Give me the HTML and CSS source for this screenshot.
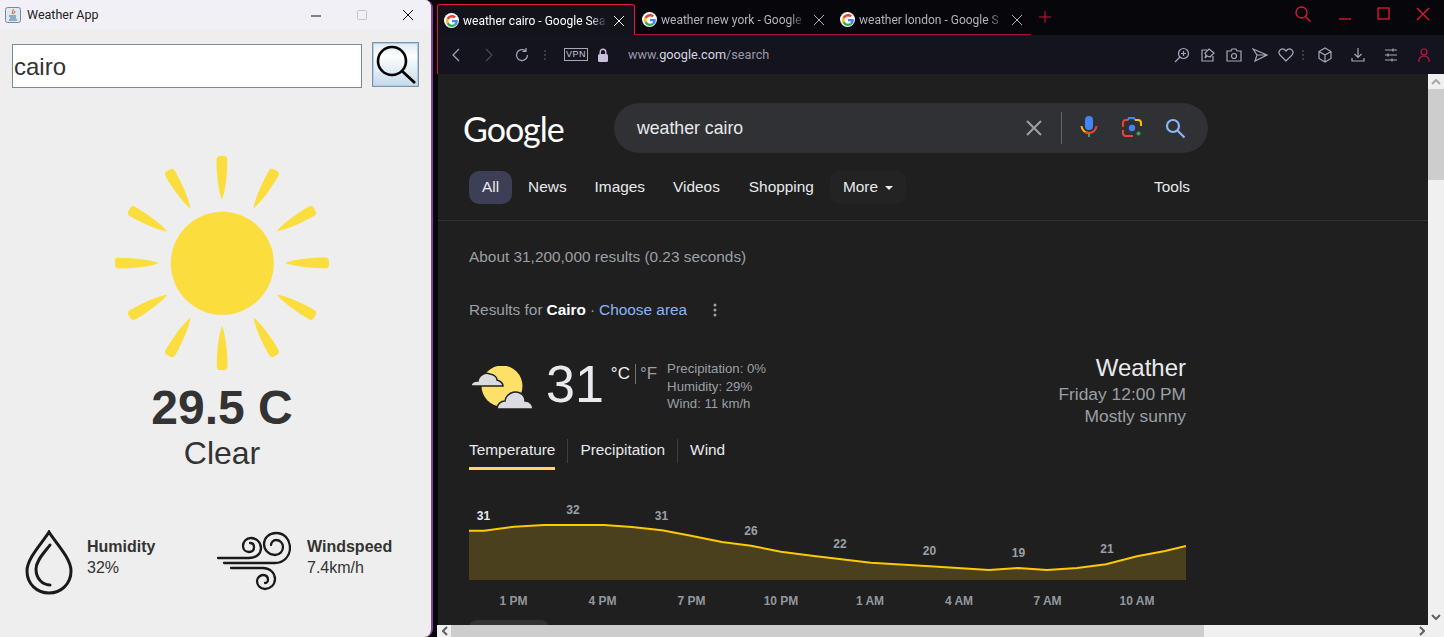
FILE: index.html
```html
<!DOCTYPE html>
<html>
  <head lang="en">
    <meta charset="UTF-8" />
    <title>Weather App</title>
    <link rel="stylesheet" href="styles.css">
  </head>

  <body>
    <svg class="defs" width="0" height="0">
      <symbol id="g" viewBox="0 0 48 48">
        <path fill="#ea4335" d="M24 9.5c3.5 0 6.700 1.200 9.200 3.600l6.900-6.900C35.900 2.400 30.500 0 24 0 14.600 0 6.500 5.400 2.600 13.200l8 6.200C12.500 13.700 17.800 9.500 24 9.500z"/>
        <path fill="#4285f4" d="M46.900 24.500c0-1.600-.1-3.100-.4-4.500H24v9h12.900c-.6 3-2.200 5.500-4.700 7.200l7.700 6c4.500-4.200 7-10.300 7-17.700z"/>
        <path fill="#fbbc05" d="M10.500 28.600c-.5-1.400-.8-3-.8-4.600s.3-3.200.8-4.600l-8-6.200C.9 16.500 0 20.100 0 24s.9 7.500 2.600 10.800l7.900-6.200z"/>
        <path fill="#34a853" d="M24 48c6.500 0 11.900-2.100 15.900-5.800l-7.700-6c-2.200 1.400-4.900 2.300-8.200 2.300-6.200 0-11.500-4.200-13.400-9.900l-8 6.200C6.500 42.600 14.600 48 24 48z"/>
      </symbol>
      <symbol id="ray" viewBox="0 0 240 240">
        <path d="M116.500 19Q116.500 15 120 15H124Q127.500 15 127.300 19Q127 45 122 59Q118 50 116.500 25Z"/>
      </symbol>
    </svg>

    <div class="app">
      <div class="titlebar">
        <svg class="java-icon" width="16" height="16" viewBox="0 0 16 16">
          <rect x="0.500" y="0.500" width="15" height="15" rx="2" fill="#dfe8f1" stroke="#6f8ba6"/>
          <path d="M8 2c1.500 2-2 3-.5 5M10 4c0 1.500-2 2-1 3" fill="none" stroke="#d9682a" stroke-width="1.100"/>
          <path d="M4 9h7M5 11h6M4 13h8" stroke="#3f6f9c" stroke-width="1.100"/>
        </svg>
        <span class="title">Weather App</span>
        <div class="win-btns">
          <svg width="12" height="12" viewBox="0 0 12 12"><path d="M1 7h10" stroke="#111"/></svg>
          <svg width="12" height="12" viewBox="0 0 12 12"><rect x="1.500" y="1.500" width="9" height="9" rx="1" fill="none" stroke="#c4c4c8"/></svg>
          <svg width="12" height="12" viewBox="0 0 12 12"><path d="M1 1l10 10M11 1L1 11" stroke="#111"/></svg>
        </div>
      </div>

      <div class="search-row">
        <input class="city-input" type="text" value="cairo" />
        <button class="search-btn">
          <svg width="45" height="43" viewBox="0 0 45 43">
            <circle cx="19" cy="18" r="14" fill="none" stroke="#000" stroke-width="2.600"/>
            <path d="M29 28l13 12" stroke="#000" stroke-width="2.800"/>
          </svg>
        </button>
      </div>

      <div class="current">
        <svg class="sun" width="240" height="240" viewBox="0 0 240 240" fill="#fbdd3d">
          <circle cx="122.300" cy="122.300" r="51.500"/>
          <g id="rays">
            <use href="#ray" width="240" height="240"/>
            <use href="#ray" width="240" height="240" transform="rotate(30 122 122)"/>
            <use href="#ray" width="240" height="240" transform="rotate(60 122 122)"/>
            <use href="#ray" width="240" height="240" transform="rotate(90 122 122)"/>
            <use href="#ray" width="240" height="240" transform="rotate(120 122 122)"/>
            <use href="#ray" width="240" height="240" transform="rotate(150 122 122)"/>
            <use href="#ray" width="240" height="240" transform="rotate(180 122 122)"/>
            <use href="#ray" width="240" height="240" transform="rotate(210 122 122)"/>
            <use href="#ray" width="240" height="240" transform="rotate(240 122 122)"/>
            <use href="#ray" width="240" height="240" transform="rotate(270 122 122)"/>
            <use href="#ray" width="240" height="240" transform="rotate(300 122 122)"/>
            <use href="#ray" width="240" height="240" transform="rotate(330 122 122)"/>
          </g>
        </svg>
        <div class="temp">29.5 C</div>
        <div class="cond">Clear</div>
      </div>

      <div class="stats">
        <div class="stat stat-hum">
          <svg width="48" height="65" viewBox="0 0 48 65" fill="none" stroke="#1a1a1a" stroke-width="3" stroke-linecap="round">
            <path d="M24 2C18 12 2 28 2 41C2 54 12 63 24 63C36 63 46 54 46 41C46 28 30 12 24 2Z"/>
            <path d="M25 15C20 22 11 30 11 39C11 48 17 55 25 55"/>
          </svg>
          <div class="stat-text">
            <b>Humidity</b>
            <span>32%</span>
          </div>
        </div>
        <div class="stat stat-wind">
          <svg width="74" height="60" viewBox="0 0 74 60" fill="none" stroke="#1a1a1a" stroke-width="2.300" stroke-linecap="round">
            <path d="M1 27H32C39 27 44 23 44 17C44 11 39 7 34 7C29 7 26 11 26 15C26 19 29 21 32 21C35 21 37 19 37 16C37 13 35 12 33 12"/>
            <path d="M7 32H58C67 32 73 25 73 17C73 8 67 2 59 2C52 2 47 7 47 13C47 19 52 24 58 24C63 24 66 20 66 16C66 12 63 9 59 9C56 9 54 12 54 14"/>
            <path d="M14 37H46C53 37 58 42 58 48C58 54 53 58 48 58C43 58 40 54 40 50C40 47 43 44 46 44C49 44 51 46 51 49C51 51 49 52 48 52"/>
          </svg>
          <div class="stat-text">
            <b>Windspeed</b>
            <span>7.4km/h</span>
          </div>
        </div>
      </div>
    </div>

    <div class="browser">
      <div class="tabstrip">
        <div class="tab tab-active">
          <span class="favicon"><svg width="12" height="12"><use href="#g" width="12" height="12"/></svg></span>
          <span class="tab-label">weather cairo - Google Sea</span>
          <svg class="tab-x" width="10" height="10" viewBox="0 0 10 10"><path d="M0 0l10 10M10 0L0 10"/></svg>
        </div>
        <div class="tab">
          <span class="favicon"><svg width="12" height="12"><use href="#g" width="12" height="12"/></svg></span>
          <span class="tab-label">weather new york - Google</span>
          <svg class="tab-x" width="10" height="10" viewBox="0 0 10 10"><path d="M0 0l10 10M10 0L0 10"/></svg>
        </div>
        <div class="tab">
          <span class="favicon"><svg width="12" height="12"><use href="#g" width="12" height="12"/></svg></span>
          <span class="tab-label">weather london - Google S</span>
          <svg class="tab-x" width="10" height="10" viewBox="0 0 10 10"><path d="M0 0l10 10M10 0L0 10"/></svg>
        </div>
        <svg class="new-tab" width="12" height="12" viewBox="0 0 12 12"><path d="M6 0v12M0 6h12"/></svg>
        <div class="wc">
          <svg width="16" height="16" viewBox="0 0 16 16"><circle cx="6.500" cy="6.500" r="5.500"/><path d="M10.500 10.500l5 5"/></svg>
          <svg width="14" height="16" viewBox="0 0 14 16"><path d="M1 13h12"/></svg>
          <svg width="14" height="14" viewBox="0 0 14 14"><rect x="1" y="1" width="11" height="11"/></svg>
          <svg width="14" height="14" viewBox="0 0 14 14"><path d="M1 1l12 12M13 1L1 13"/></svg>
        </div>
      </div>

      <div class="toolbar">
        <svg class="tb-icon" width="16" height="16" viewBox="0 0 16 16"><path d="M11 2L5 8l6 6"/></svg>
        <svg class="tb-icon dim" width="16" height="16" viewBox="0 0 16 16"><path d="M5 2l6 6-6 6"/></svg>
        <svg class="tb-icon" width="16" height="16" viewBox="0 0 16 16"><path d="M13.500 8A5.500 5.500 0 1 1 11.500 3.800M12 1v3.500H8.500"/></svg>
        <span class="tb-dots"></span>
        <span class="vpn">VPN</span>
        <svg class="lock" width="12" height="14" viewBox="0 0 12 14"><rect x="1" y="6" width="10" height="8" rx="1.500" fill="#c9bfd9"/><path d="M3.200 6V4a2.800 2.800 0 0 1 5.600 0v2" fill="none" stroke="#c9bfd9" stroke-width="1.400"/></svg>
        <span class="url">www.<em>google.com</em>/search</span>
        <div class="tb-right">
          <svg class="tb-icon" width="16" height="16" viewBox="0 0 16 16"><circle cx="9.500" cy="6.500" r="5"/><path d="M6 10L1 15M9.500 4v5M7 6.500h5"/></svg>
          <svg class="tb-icon" width="16" height="16" viewBox="0 0 16 16"><path d="M7 3H2v11h11V9M9 2l5 4-4 4-3-1-2 2 1-3-1-2z"/></svg>
          <svg class="tb-icon" width="16" height="16" viewBox="0 0 16 16"><path d="M1 4h4l1-2h4l1 2h4v10H1z"/><circle cx="8" cy="9" r="2.500"/></svg>
          <svg class="tb-icon" width="16" height="16" viewBox="0 0 16 16"><path d="M1 2l14 6-12 6 2-6zM5 8h10"/></svg>
          <svg class="tb-icon" width="16" height="16" viewBox="0 0 16 16"><path d="M8 14L2 8C-1 4 4-.5 8 4c4-4.500 9 0 6 4z"/></svg>
          <span class="tb-dots tb-dots-r"></span>
          <svg class="tb-icon wide" width="16" height="16" viewBox="0 0 16 16"><path d="M8 1l6 3.500v7L8 15l-6-3.500v-7zM2 4.500L8 8l6-3.500M8 8v7"/></svg>
          <svg class="tb-icon wide" width="16" height="16" viewBox="0 0 16 16"><path d="M8 1v9M4.500 7L8 10.500 11.500 7M2 11v3h12v-3"/></svg>
          <svg class="tb-icon wide" width="16" height="16" viewBox="0 0 16 16"><path d="M2 3h12M2 8h12M2 13h12M10 1.500v3M5 6.500v3M9 11.500v3"/></svg>
          <svg class="tb-icon wide user" width="16" height="16" viewBox="0 0 16 16"><circle cx="8" cy="5" r="3"/><path d="M3 15v-2c0-2 2-4 5-4s5 2 5 4v2"/></svg>
        </div>
      </div>

      <div class="viewport">
        <div class="page">
          <div class="g-head">
            <div class="g-logo">Google</div>
            <div class="g-search">
              <span class="g-query">weather cairo</span>
              <svg class="g-clear" width="16" height="16" viewBox="0 0 16 16"><path d="M1 1l14 14M15 1L1 15" stroke="#9aa0a6" stroke-width="2"/></svg>
              <span class="g-sep"></span>
              <svg class="g-mic" width="18" height="24" viewBox="0 0 18 24">
                <rect x="5" y="0" width="8" height="14" rx="4" fill="#4285f4"/>
                <path d="M1.500 10a7.500 7.500 0 0 0 7.500 7" fill="none" stroke="#fbbc05" stroke-width="2"/>
                <path d="M16.500 10a7.500 7.500 0 0 1-7.500 7 7 7 0 0 1-4-1.200" fill="none" stroke="#ea4335" stroke-width="2"/>
                <path d="M9 17v4" stroke="#34a853" stroke-width="2"/>
              </svg>
              <svg class="g-lens" width="22" height="22" viewBox="0 0 22 22" fill="none" stroke-width="2">
                <path d="M2 10V6a3 3 0 0 1 3-3h2" stroke="#ea4335"/>
                <path d="M7 3l1-2h5l1 2" stroke="#4285f4"/>
                <path d="M14 3h3a3 3 0 0 1 3 3v3" stroke="#fbbc05"/>
                <path d="M2 13v3a3 3 0 0 0 3 3h7" stroke="#ea4335"/>
                <circle cx="11" cy="11" r="3.200" fill="#4285f4" stroke="none"/>
                <circle cx="17.500" cy="16.500" r="2" fill="#34a853" stroke="none"/>
              </svg>
              <svg class="g-go" width="22" height="22" viewBox="0 0 22 22" fill="none" stroke="#8ab4f8" stroke-width="2.200"><circle cx="9" cy="9" r="6"/><path d="M13.500 13.500l7 7"/></svg>
            </div>
          </div>

          <div class="g-nav">
            <a class="nav-item nav-all">All</a>
            <a class="nav-item">News</a>
            <a class="nav-item">Images</a>
            <a class="nav-item">Videos</a>
            <a class="nav-item nav-shop">Shopping</a>
            <a class="nav-item nav-more">More <i class="caret"></i></a>
            <a class="nav-tools">Tools</a>
          </div>

          <div class="results">
            <div class="stats-line">About 31,200,000 results (0.23 seconds)</div>
            <div class="area-line">
              Results for <b>Cairo</b> · <a>Choose area</a>
              <svg class="kebab" width="4" height="14" viewBox="0 0 4 14" fill="#9aa0a6"><circle cx="2" cy="2" r="1.500"/><circle cx="2" cy="7" r="1.500"/><circle cx="2" cy="12" r="1.500"/></svg>
            </div>

            <div class="wx-top">
              <svg class="wx-icon" width="64" height="44" viewBox="0 0 64 44">
                <circle cx="32" cy="20" r="20.500" fill="#fde068"/>
                <path d="M1 20C1 17 4 15 8 15C9 9 15 6 20 8C25 9 27 12 27 14C30 15 33 17 33 20Z" fill="#dadce0" stroke="#202124" stroke-width="1.500"/>
                <path d="M27 43C27 38 31 35 35 35C36 28 44 24 50 27C54 29 55 32 55 35C60 35 63 39 63 43Z" fill="#dadce0" stroke="#202124" stroke-width="1.500"/>
              </svg>
              <span class="wx-deg">31</span>
              <span class="wx-units"><span class="wx-c">°C</span><span class="wx-f">°F</span></span>
              <div class="wx-details">
                <div>Precipitation: 0%</div>
                <div>Humidity: 29%</div>
                <div>Wind: 11 km/h</div>
              </div>
              <div class="wx-right">
                <div class="wx-title">Weather</div>
                <div>Friday 12:00 PM</div>
                <div>Mostly sunny</div>
              </div>
            </div>

            <div class="wx-tabs">
              <span class="wx-tab wx-tab-on">Temperature</span>
              <span class="wx-tab">Precipitation</span>
              <span class="wx-tab">Wind</span>
            </div>

            <svg class="chart" width="717" height="110" viewBox="0 0 717 110">
              <path class="area" d="M0 30.700L15 30.700 45 26.700 75 25 135 25 163 27 193 30.300 222 35.700 253 42 282 45.700 312 51.700 343 55.700 402 62.700 461 66.300 520 70 549 68 578 70 608 68 637 64.300 668 56.300 696 51 717 46V80H0Z"/>
              <path class="line" d="M0 30.700L15 30.700 45 26.700 75 25 135 25 163 27 193 30.300 222 35.700 253 42 282 45.700 312 51.700 343 55.700 402 62.700 461 66.300 520 70 549 68 578 70 608 68 637 64.300 668 56.300 696 51 717 46"/>
              <text class="val val-now" x="14.500" y="20">31</text>
              <text class="val" x="104" y="14">32</text>
              <text class="val" x="192.500" y="20">31</text>
              <text class="val" x="282" y="35">26</text>
              <text class="val" x="371" y="48">22</text>
              <text class="val" x="460.500" y="55">20</text>
              <text class="val" x="549.500" y="57">19</text>
              <text class="val" x="638" y="53">21</text>
              <text class="hr" x="44.500" y="105">1 PM</text>
              <text class="hr" x="133.500" y="105">4 PM</text>
              <text class="hr" x="222.500" y="105">7 PM</text>
              <text class="hr" x="312" y="105">10 PM</text>
              <text class="hr" x="401" y="105">1 AM</text>
              <text class="hr" x="490" y="105">4 AM</text>
              <text class="hr" x="578.500" y="105">7 AM</text>
              <text class="hr" x="668" y="105">10 AM</text>
            </svg>
            <div class="peek"></div>
          </div>
        </div>

        <div class="vscroll">
          <svg class="sb-arrow" width="10" height="6" viewBox="0 0 10 6"><path d="M1 5l4-4 4 4"/></svg>
          <div class="vthumb"></div>
          <svg class="sb-arrow sb-down" width="10" height="6" viewBox="0 0 10 6"><path d="M1 1l4 4 4-4"/></svg>
        </div>
      </div>

      <div class="hscroll">
        <svg class="sb-arrow" width="6" height="10" viewBox="0 0 6 10"><path d="M5 1L1 5l4 4"/></svg>
        <div class="hthumb"></div>
        <svg class="sb-arrow" width="6" height="10" viewBox="0 0 6 10"><path d="M1 1l4 4-4 4"/></svg>
      </div>
    </div>
  </body>
</html>
```
FILE: styles.css
```css
* {
  padding: 0;
  margin: 0;
  box-sizing: border-box;
}

html,
body {
  height: 637px;
  overflow: hidden;
}

body {
  display: flex;
  background-color: #07060b;
  font-family: "Liberation Sans", Arial, sans-serif;
}

.defs {
  display: none;
}

/* java window */
.app {
  width: 433px;
  height: 637px;
  flex: none;
  background-color: #eeeeee;
  border-right: 2px solid #7f4596;
  border-radius: 0 8px 8px 0;
  color: #333;
  overflow: hidden;
}

.titlebar {
  height: 29px;
  display: flex;
  align-items: center;
  padding-left: 5px;
  background-color: #f2f0f7;
}

.java-icon {
  margin-right: 6px;
}

.title {
  font: 12.500px Roboto, sans-serif;
  color: #222;
}

.win-btns {
  margin-left: auto;
  display: flex;
  gap: 34px;
  padding-right: 17px;
}

.search-row {
  display: flex;
  align-items: flex-start;
  gap: 10px;
  padding: 13px 0 0 12px;
}

.city-input {
  width: 350px;
  height: 44px;
  margin-top: 2px;
  padding: 2px 1px 0;
  border: 1px solid #7a8a99;
  background-color: #fff;
  font: 24px "Liberation Sans", sans-serif;
  color: #333;
  outline: none;
}

.search-btn {
  width: 47px;
  height: 45px;
  display: block;
  border: 1px solid #7b93ab;
  box-shadow: inset 0 0 0 1px #b6cde0;
  background: linear-gradient(#dfe9f2, #fdfeff 30%, #c6d9ea);
}

.search-btn svg {
  display: block;
}

.current {
  padding-left: 13px;
  text-align: center;
}

.sun {
  display: block;
  margin: 53px 0 0 87px;
}

.temp {
  margin-top: -2px;
  font-size: 48px;
  font-weight: bold;
  line-height: 58px;
}

.cond {
  margin-top: -2px;
  font-size: 32px;
  line-height: 37px;
}

.stats {
  display: flex;
  margin-top: 58px;
  padding-left: 25px;
}

.stat {
  display: flex;
  align-items: flex-start;
}

.stat-hum {
  width: 192px;
  gap: 14px;
}

.stat-wind {
  gap: 16px;
  margin-top: 1px;
}

.stat-text {
  display: flex;
  flex-direction: column;
  margin-top: 6px;
  font-size: 16px;
  line-height: 21px;
}

.stat-wind .stat-text {
  margin-top: 5px;
}

/* browser */
.browser {
  flex: 1;
  min-width: 0;
  height: 637px;
  padding-left: 4px;
  display: flex;
  flex-direction: column;
}

.tabstrip {
  height: 35px;
  display: flex;
  align-items: flex-start;
  padding-top: 4px;
  flex: none;
}

.tab {
  width: 198px;
  height: 31px;
  display: flex;
  align-items: center;
  padding: 1px 9px 0 7px;
  border-bottom: 1px solid #a01432;
  font: 12px Roboto, sans-serif;
  color: #b5b2bd;
}

.tab-active {
  background-color: #13131c;
  border: 1px solid #e5173f;
  border-bottom: 0;
  border-radius: 3px 3px 0 0;
  padding-left: 6px;
  padding-right: 10px;
  color: #fff;
}

.favicon {
  width: 15px;
  height: 15px;
  flex: none;
  display: flex;
  align-items: center;
  justify-content: center;
  border-radius: 50%;
  background-color: #fff;
  margin-right: 4px;
}

.favicon svg {
  display: block;
}

.tab-label {
  flex: 1;
  min-width: 0;
  white-space: nowrap;
  -webkit-mask-image: linear-gradient(to right, #000 88%, transparent);
  mask-image: linear-gradient(to right, #000 88%, transparent);
}

.tab-x {
  flex: none;
  margin-left: 7px;
  fill: none;
  stroke: currentColor;
}

.new-tab {
  margin: 7px 0 0 8px;
  fill: none;
  stroke: #c9163c;
}

.wc {
  margin-left: auto;
  display: flex;
  align-items: center;
  gap: 25px;
  height: 20px;
  padding-right: 14px;
}

.wc svg {
  fill: none;
  stroke: #e5173f;
  stroke-width: 1.300;
}

.wc svg:first-child {
  margin-right: 2px;
  margin-left: -2px;
}

.toolbar {
  height: 39px;
  flex: none;
  display: flex;
  align-items: center;
  padding: 0 12px 0 10px;
  background-color: #14141e;
  border-left: 1px solid #e5173f;
}

.tb-icon {
  flex: none;
  margin-right: 17px;
  fill: none;
  stroke: #a9a5b8;
  stroke-width: 1.200;
}

.tb-icon.dim {
  stroke: #4a4956;
}

.tb-dots {
  width: 2px;
  height: 10px;
  margin: 0 18px 0 -3px;
  background: repeating-linear-gradient(#3c3b49 0 2px, transparent 2px 4px);
}

.vpn {
  width: 24px;
  height: 13px;
  border: 1px solid #a9a5b8;
  font: 9px/11px "Liberation Sans", sans-serif;
  letter-spacing: 0.500px;
  text-align: center;
  color: #c9c5d5;
}

.lock {
  margin: 0 19px 0 9px;
}

.url {
  font: 12.700px Roboto, sans-serif;
  color: #9b97aa;
}

.url em {
  font-style: normal;
  color: #d8d6e0;
}

.tb-right {
  margin-left: auto;
  display: flex;
  align-items: center;
}

.tb-right .tb-icon {
  margin-right: 10px;
}

.tb-right .tb-dots-r {
  margin: 0 13px 0 -2px;
}

.tb-right .wide {
  margin-right: 17px;
}

.tb-right .user {
  margin-right: 0;
  stroke: #c2173f;
}

.viewport {
  flex: 1;
  min-height: 0;
  margin-left: 1px;
  display: flex;
}

.page {
  flex: 1;
  min-width: 0;
  background-color: #1f1f1f;
  overflow: hidden;
}

.g-head {
  display: flex;
  align-items: center;
  height: 50px;
  margin-top: 29px;
  padding-left: 25px;
}

.g-logo {
  width: 151px;
  font: 34px Lato, "Liberation Sans", sans-serif;
  letter-spacing: -1px;
  color: #fff;
}

.g-search {
  width: 594px;
  height: 50px;
  display: flex;
  align-items: center;
  padding-left: 23px;
  border-radius: 25px;
  background-color: #303134;
}

.g-query {
  width: 389px;
  font-size: 17.700px;
  color: #e8eaed;
}

.g-clear {
  margin-right: 19px;
}

.g-sep {
  width: 1px;
  height: 32px;
  background-color: #5f6368;
  margin-right: 18px;
}

.g-mic {
  margin-right: 23px;
}

.g-lens {
  margin-right: 21px;
}

.g-nav {
  display: flex;
  align-items: center;
  height: 33px;
  margin-top: 18px;
  padding: 0 238px 0 31px;
}

.nav-item {
  padding: 0 14px;
  font-size: 15.400px;
  line-height: 31px;
  height: 33px;
  color: #e8eaed;
}

.nav-all {
  padding: 0 13px;
  margin-right: 2px;
  border-radius: 10px;
  background-color: #3c3f55;
}

.nav-shop {
  margin-left: 1px;
}

.nav-more {
  margin-left: 2px;
  padding: 0 13px;
  border-radius: 10px;
  background-color: #232323;
}

.caret {
  display: inline-block;
  margin-left: 3px;
  vertical-align: 2px;
  border: 4px solid transparent;
  border-top-color: #e8eaed;
  border-bottom: 0;
}

.nav-tools {
  margin-left: auto;
  font-size: 15.400px;
  line-height: 31px;
  height: 33px;
  color: #e8eaed;
}

.results {
  margin-top: 16px;
  padding: 27px 0 0 31px;
  border-top: 1px solid #303134;
  width: 100%;
}

.stats-line {
  font-size: 15.400px;
  line-height: 18px;
  color: #9aa0a6;
}

.area-line {
  display: flex;
  align-items: center;
  gap: 4px;
  margin-top: 35px;
  font-size: 15.400px;
  line-height: 18px;
  color: #9aa0a6;
}

.area-line b {
  color: #fff;
}

.area-line a {
  color: #8ab4f8;
}

.kebab {
  margin-left: 22px;
}

.wx-top {
  display: flex;
  align-items: flex-start;
  width: 717px;
  margin-top: 33px;
}

.wx-icon {
  margin: 14px 12px 0 1px;
}

.wx-deg {
  font-size: 52px;
  line-height: 60px;
  color: #e8eaed;
  margin-top: 2px;
}

.wx-units {
  display: flex;
  margin: 12px 0 0 7px;
  font-size: 17px;
  line-height: 20px;
}

.wx-c {
  padding-right: 5px;
  border-right: 1px solid #70757a;
  color: #f1f3f4;
}

.wx-f {
  padding-left: 4px;
  color: #9aa0a6;
}

.wx-details {
  margin: 8px 0 0 10px;
  font-size: 13.200px;
  line-height: 17.500px;
  color: #9aa0a6;
}

.wx-right {
  margin: 1px 0 0 auto;
  text-align: right;
  font-size: 17.400px;
  line-height: 22px;
  color: #9aa0a6;
}

.wx-title {
  font-size: 24px;
  line-height: 30px;
  color: #e8eaed;
}

.wx-tabs {
  display: flex;
  margin-top: 12px;
  height: 31px;
}

.wx-tab {
  height: 24px;
  padding: 0 12px;
  border-right: 1px solid #3c4043;
  font-size: 15.400px;
  line-height: 22px;
  color: #e8eaed;
}

.wx-tab:last-child {
  border-right: 0;
}

.wx-tab-on {
  padding: 0;
  margin-right: 13px;
  height: 31px;
  border-right: 0;
  border-bottom: 3px solid #fdd663;
  position: relative;
}

.wx-tab-on::after {
  content: "";
  position: absolute;
  right: -13px;
  top: 0;
  height: 24px;
  border-right: 1px solid #3c4043;
}

.chart {
  display: block;
  margin-top: 30px;
}

.area {
  fill: #4b401e;
}

.line {
  fill: none;
  stroke: #fbc905;
  stroke-width: 2;
}

.val {
  font-size: 12px;
  font-weight: bold;
  fill: #9aa0a6;
  text-anchor: middle;
}

.val-now {
  fill: #e8eaed;
}

.hr {
  font-size: 12px;
  font-weight: bold;
  fill: #93989e;
  text-anchor: middle;
}

.peek {
  width: 80px;
  height: 20px;
  margin-top: 10px;
  border-radius: 8px;
  background-color: #303134;
}

.vscroll {
  width: 16px;
  flex: none;
  display: flex;
  flex-direction: column;
  align-items: center;
  background-color: #f0f0f0;
}

.vthumb {
  width: 100%;
  height: 91px;
  margin-top: 4px;
  background-color: #cdcdcd;
}

.sb-arrow {
  fill: none;
  stroke: #606060;
  stroke-width: 2;
  flex: none;
}

.vscroll .sb-arrow:first-child {
  margin-top: 5px;
  stroke: #a8a8a8;
}

.sb-down {
  margin-top: auto;
  margin-bottom: 5px;
}

.hscroll {
  height: 12px;
  flex: none;
  display: flex;
  align-items: center;
  padding: 0 19px 0 5px;
  background-color: #f0f0f0;
}

.hthumb {
  width: 753px;
  height: 12px;
  margin-left: 3px;
  margin-right: auto;
  background-color: #cdcdcd;
}
```
